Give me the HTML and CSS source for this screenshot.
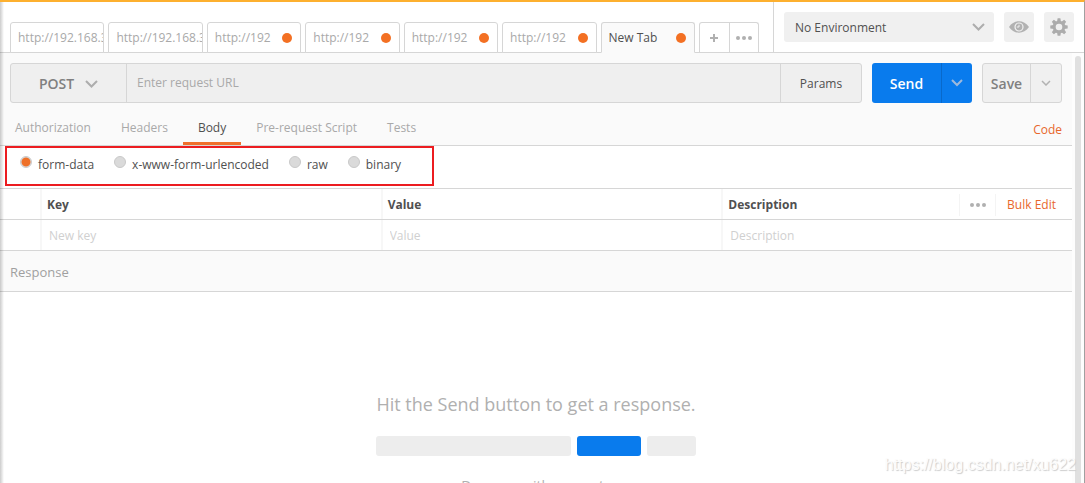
FILE: index.html
```html
<!DOCTYPE html>
<html lang="en">
<head>
<meta charset="utf-8">
<title>Request builder</title>
<link rel="stylesheet" href="styles.css">
</head>
<body>
<div class="app">
  <header class="topbar">
    <nav class="tabs" aria-label="Open requests">
      <button class="tab"><span class="tab-name">http://192.168.3</span></button>
      <button class="tab"><span class="tab-name">http://192.168.3</span></button>
      <button class="tab"><span class="tab-name">http://192</span><i class="unsaved"></i></button>
      <button class="tab"><span class="tab-name">http://192</span><i class="unsaved"></i></button>
      <button class="tab"><span class="tab-name">http://192</span><i class="unsaved"></i></button>
      <button class="tab"><span class="tab-name">http://192</span><i class="unsaved"></i></button>
      <button class="tab tab-active"><span class="tab-name">New Tab</span><i class="unsaved"></i></button>
    </nav>
    <div class="tab-tools">
      <button aria-label="Add tab"><svg width="8" height="8" viewBox="0 0 8 8"><path d="M4 0v8M0 4h8" stroke="#b0b0b0" stroke-width="2"/></svg></button>
      <button aria-label="Tab options"><svg class="dots" width="16" height="4" viewBox="0 0 16 4"><circle cx="2" cy="2" r="2"/><circle cx="8" cy="2" r="2"/><circle cx="14" cy="2" r="2"/></svg></button>
    </div>
    <div class="environment">
      <div class="env-picker">
        <select class="env-select" aria-label="Environment"><option>No Environment</option></select>
        <svg class="env-chevron" width="13" height="8" viewBox="0 0 13 8"><path d="M1 1l5.500 5.500L12 1" fill="none" stroke="#adadad" stroke-width="2"/></svg>
      </div>
      <button class="icon-button" aria-label="Environment quick look">
        <svg width="20" height="12" viewBox="0 0 20 12"><path fill="#b2b2b2" fill-rule="evenodd" d="M0 6C5-1.600 15-1.600 20 6C15 13.600 5 13.600 0 6zM10 1.400a4.600 4.600 0 1 0 0 9.200a4.600 4.600 0 0 0 0-9.200z"/><circle cx="10" cy="6" r="3.400" fill="#b2b2b2"/><path d="M10 6V3.800M10 6H7.800" stroke="#f0f0f0" stroke-width="1"/></svg>
      </button>
      <button class="icon-button" aria-label="Settings">
        <svg width="18" height="18" viewBox="-9 -9 18 18"><g fill="#acacac"><path id="tooth" d="M-2-5L-1.400-8.700H1.400L2-5z"/><use href="#tooth" transform="rotate(45)"/><use href="#tooth" transform="rotate(90)"/><use href="#tooth" transform="rotate(135)"/><use href="#tooth" transform="rotate(180)"/><use href="#tooth" transform="rotate(225)"/><use href="#tooth" transform="rotate(270)"/><use href="#tooth" transform="rotate(315)"/></g><circle r="4.800" fill="none" stroke="#acacac" stroke-width="3"/></svg>
      </button>
    </div>
  </header>

  <div class="workspace">
    <main class="content">
      <section class="builder">
        <div class="request-line">
          <div class="url-bar">
            <button class="method">POST <svg width="13" height="8" viewBox="0 0 13 8"><path d="M1 1l5.500 5.500L12 1" fill="none" stroke="#adadad" stroke-width="2"/></svg></button>
            <input class="url" type="text" placeholder="Enter request URL" aria-label="Request URL">
            <button class="params">Params</button>
          </div>
          <div class="split send">
            <button class="split-main">Send</button>
            <button class="split-more" aria-label="Send options"><svg width="12" height="8" viewBox="0 0 12 8"><path d="M1 1l5 5l5-5" fill="none" stroke="#9eb9dc" stroke-width="2"/></svg></button>
          </div>
          <div class="split save">
            <button class="split-main">Save</button>
            <button class="split-more" aria-label="Save options"><svg width="10" height="6" viewBox="0 0 10 6"><path d="M1 1l4 4l4-4" fill="none" stroke="#b2b2b2" stroke-width="1.500"/></svg></button>
          </div>
        </div>
        <div class="sections">
          <button class="section">Authorization</button>
          <button class="section">Headers</button>
          <button class="section section-active">Body</button>
          <button class="section">Pre-request Script</button>
          <button class="section">Tests</button>
          <a class="code-link" href="#code">Code</a>
        </div>
      </section>

      <div class="body-types">
        <label class="body-type"><input type="radio" name="body-type" checked><span>form-data</span></label>
        <label class="body-type"><input type="radio" name="body-type"><span>x-www-form-urlencoded</span></label>
        <label class="body-type"><input type="radio" name="body-type"><span>raw</span></label>
        <label class="body-type"><input type="radio" name="body-type"><span>binary</span></label>
        <div class="highlight"></div>
      </div>

      <table class="params-table">
        <thead>
          <tr>
            <td></td>
            <th>Key</th>
            <th>Value</th>
            <th><span>Description</span>
              <button class="more" aria-label="Columns"><svg class="dots" width="16" height="4" viewBox="0 0 16 4"><circle cx="2" cy="2" r="2"/><circle cx="8" cy="2" r="2"/><circle cx="14" cy="2" r="2"/></svg></button>
              <a class="bulk" href="#bulk">Bulk Edit</a>
            </th>
          </tr>
        </thead>
        <tbody>
          <tr>
            <td></td>
            <td><input type="text" placeholder="New key" aria-label="Key"></td>
            <td><input type="text" placeholder="Value" aria-label="Value"></td>
            <td><input type="text" placeholder="Description" aria-label="Description"></td>
          </tr>
        </tbody>
      </table>

      <h2 class="response-title">Response</h2>
      <section class="empty">
        <p class="empty-title">Hit the Send button to get a response.</p>
        <div class="sketch"><i class="sketch-url"></i><i class="sketch-send"></i><i class="sketch-save"></i></div>
        <p class="empty-more">Do more with requests</p>
      </section>
    </main>
    <div class="scrollbar"><div class="thumb"></div></div>
  </div>
  <div class="watermark">https://blog.csdn.net/xu622</div>
</div>
</body>
</html>
```
FILE: styles.css
```css
* { box-sizing: border-box; }

body {
  margin: 0;
  font: 12px/18px "Open Sans", "Noto Sans", sans-serif;
  color: #505050;
  background: #fff;
}

button, input, select {
  margin: 0;
  padding: 0;
  border: 0;
  background: none;
  font: inherit;
  color: inherit;
  outline: 0;
}

svg { display: block; flex: none; }
a { color: #e8672c; text-decoration: none; }
.dots { fill: #b0b0b0; }

.app {
  position: relative;
  display: flex;
  flex-direction: column;
  height: 100vh;
  overflow: hidden;
  border-top: 2px solid #fdb02f;
  border-right: 1px solid #a0a0a0;
}

.app::before {
  content: "";
  position: absolute;
  z-index: 2;
  inset: 0 auto 0 0;
  width: 4px;
  background: linear-gradient(to right, rgba(0, 0, 0, .2), transparent);
}

.topbar {
  display: flex;
  flex: none;
  height: 51px;
  padding-left: 10px;
  border-bottom: 1px solid #d6d6d6;
}

.tabs {
  display: flex;
  flex: 1;
  align-items: flex-end;
  gap: 4px;
  min-width: 0;
  margin-bottom: -1px;
}

.tab {
  display: flex;
  flex: 1;
  align-items: center;
  justify-content: space-between;
  min-width: 0;
  height: 31px;
  padding-left: 7px;
  overflow: hidden;
  border: 1px solid #d6d6d6;
  border-radius: 3px 3px 0 0;
  background: #fff;
  color: #a9a9a9;
  white-space: nowrap;
}

.tab-active {
  border-bottom-color: #fafafa;
  background: #fafafa;
  color: #505050;
}

.unsaved {
  flex: none;
  width: 10px;
  height: 10px;
  margin-right: 8px;
  border-radius: 50%;
  background: #f37023;
}

.tab-tools {
  display: flex;
  align-self: flex-end;
  width: 60px;
  height: 30px;
  margin: 0 14px 0 4px;
  border: 1px solid #d6d6d6;
  border-bottom: 0;
  border-radius: 3px 3px 0 0;
}

.tab-tools button {
  display: grid;
  flex: 1;
  place-items: center;
}

.tab-tools button + button { border-left: 1px solid #d6d6d6; }

.environment {
  display: flex;
  gap: 10px;
  padding: 10px 10px 0;
  border-left: 1px solid #d6d6d6;
}

.env-picker {
  position: relative;
  width: 210px;
  height: 30px;
}

.env-select {
  width: 100%;
  height: 100%;
  padding: 2px 0 0 11px;
  border-radius: 3px;
  background: #f0f0f0;
  appearance: none;
}

.env-chevron {
  position: absolute;
  top: 11px;
  right: 9px;
  pointer-events: none;
}

.icon-button {
  display: grid;
  place-items: center;
  width: 30px;
  height: 30px;
  border-radius: 3px;
  background: #f0f0f0;
}

.workspace {
  display: flex;
  flex: 1;
  min-height: 0;
}

.content {
  display: flex;
  flex: 1;
  flex-direction: column;
  min-width: 0;
}

.builder {
  flex: none;
  border-bottom: 1px solid #d6d6d6;
  background: #fafafa;
}

.request-line {
  display: flex;
  gap: 10px;
  padding: 10px 10px 0;
}

.url-bar {
  display: flex;
  flex: 1;
  height: 40px;
  min-width: 0;
  border: 1px solid #d6d6d6;
  border-radius: 3px;
  background: #efefef;
}

.method {
  display: flex;
  align-items: center;
  justify-content: center;
  gap: 11px;
  width: 116px;
  padding-top: 2px;
  border-right: 1px solid #d6d6d6;
  color: #808080;
  font-size: 14px;
  font-weight: 600;
}

.url {
  flex: 1;
  min-width: 0;
  padding-left: 10px;
}

.url::placeholder { color: #a9a9a9; opacity: 1; }

.params {
  width: 81px;
  padding-top: 2px;
  border-left: 1px solid #d6d6d6;
}

.split {
  display: flex;
  height: 40px;
  border-radius: 3px;
  font-size: 14px;
  font-weight: 600;
}

.split-main { flex: 1; padding-top: 2px; }
.split-more { display: grid; place-items: center; width: 31px; }
.send { width: 100px; background: #097bed; color: #fff; }
.send .split-more { border-left: 1px solid #0869cb; }
.save { width: 80px; border: 1px solid #d6d6d6; background: #f0f0f0; color: #808080; }
.save .split-more { border-left: 1px solid #d6d6d6; }

.sections {
  display: flex;
  height: 42px;
  padding-right: 10px;
}

.section {
  padding: 13px 15px 3px;
  border-bottom: 3px solid transparent;
  color: #a9a9a9;
}

.section-active { border-bottom-color: #f0702c; color: #505050; }
.code-link { margin-left: auto; padding-top: 18px; }

.body-types {
  position: relative;
  display: flex;
  flex: none;
  gap: 20px;
  height: 43px;
  padding: 10px 20px 0;
  border-bottom: 1px solid #d6d6d6;
}

.body-type { display: flex; gap: 6px; }

.body-type input {
  width: 12px;
  height: 12px;
  border: 1px solid #c9c9c9;
  border-radius: 50%;
  background: #dadada;
  appearance: none;
}

.body-type input:checked { background: radial-gradient(circle, #ee7028 4px, #dedede 5px); }

.highlight {
  position: absolute;
  top: 0;
  left: 5px;
  width: 429px;
  height: 40px;
  border: 2px solid #ec1c20;
  pointer-events: none;
}

.params-table { display: block; flex: none; }
.params-table thead, .params-table tbody { display: block; }

.params-table tr {
  display: grid;
  grid-template-columns: 40px 34fr 34fr 35fr;
  height: 31px;
  border-bottom: 1px solid #d6d6d6;
}

.params-table th, .params-table td {
  display: flex;
  align-items: center;
  min-width: 0;
  padding: 2px 0 0;
  text-align: left;
}

.params-table th { padding-left: 5px; border-left: 2px solid #f7f7f7; font-weight: 700; }
.params-table td + td { padding-left: 7px; border-left: 2px solid #f7f7f7; }
.params-table input { width: 100%; }
.params-table input::placeholder { color: #d0d0d0; opacity: 1; }

.more {
  display: grid;
  place-items: center;
  width: 37px;
  height: 22px;
  margin-left: auto;
  border: 1px solid #f4f4f4;
  border-width: 0 1px;
}

.bulk { padding: 0 16px 0 11px; font-weight: 400; }

.response-title {
  flex: none;
  margin: 0;
  padding: 12px 10px 10px;
  border-bottom: 1px solid #d6d6d6;
  background: #fafafa;
  color: #a0a0a0;
  font-size: 13px;
  font-weight: 400;
  line-height: 18px;
}

.empty {
  flex: 1;
  min-height: 0;
  padding-top: 100px;
  overflow: hidden;
  color: #b0b0b0;
  text-align: center;
}

.empty p { margin: 0; }
.empty-title { font-size: 18px; line-height: 24px; }

.sketch {
  display: flex;
  justify-content: center;
  gap: 6px;
  margin: 20px 0;
}

.sketch i { height: 20px; border-radius: 3px; background: #ededed; }
.sketch-url { width: 195px; }
.sketch-send { width: 64px; }
.sketch-save { width: 49px; }
.sketch .sketch-send { background: #097bed; }
.empty-more { font-size: 14px; line-height: 20px; }

.scrollbar { flex: none; width: 12px; padding: 3px 3px 0; background: #fdfdfd; }
.thumb { height: 100%; border-radius: 3px 3px 0 0; background: #e0e0e0; }

.watermark {
  position: absolute;
  right: 8px;
  bottom: 8px;
  color: #fcfcfc;
  font: 16px/20px "Liberation Sans", Arial, sans-serif;
  text-shadow: 1px 1px 1px #ccc;
}
```
